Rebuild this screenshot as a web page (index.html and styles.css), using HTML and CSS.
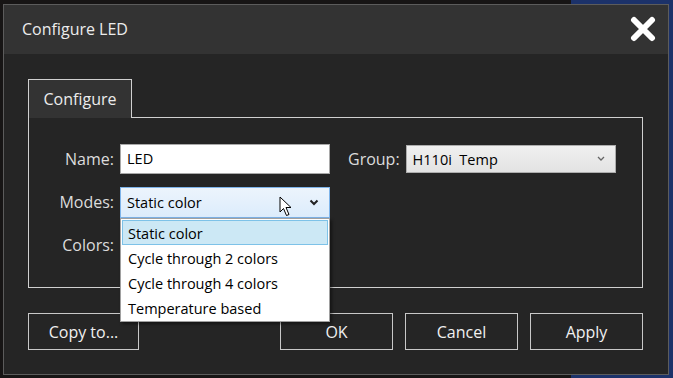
FILE: index.html
```html
<!DOCTYPE html>
<html lang="en">
<head>
  <meta charset="UTF-8">
  <title>Configure LED</title>
  <link rel="stylesheet" href="styles.css">
</head>
<body>
  <div class="dialog">
    <div class="titlebar">
      <span class="title">Configure LED</span>
      <svg class="close" width="26" height="26" viewBox="0 0 26 26">
        <path d="M4 4 L22 22 M22 4 L4 22" stroke="#fff" stroke-width="6" stroke-linecap="round"/>
      </svg>
    </div>
    <div class="content">
      <div class="tab">Configure</div>
      <div class="panel">
        <div class="row">
          <label class="lbl">Name:</label>
          <div class="textbox">LED</div>
          <label class="lbl group-lbl">Group:</label>
          <div class="combo grey">
            <span>H110i&nbsp; Temp</span>
            <svg width="8" height="6" viewBox="0 0 8 6"><path d="M1 1 L4 4 L7 1" fill="none" stroke="#666" stroke-width="1.3"/></svg>
          </div>
        </div>
        <div class="row">
          <label class="lbl">Modes:</label>
          <div class="combo active">
            <span>Static color</span>
            <svg width="10" height="7" viewBox="0 0 10 7"><path d="M1.5 1.5 L5 5 L8.5 1.5" fill="none" stroke="#222" stroke-width="2"/></svg>
            <svg class="cursor" width="14" height="21" viewBox="0 0 14 21">
              <path d="M1 1 L1 16 L4.5 12.5 L7.5 19.5 L10 18.5 L7 11.5 L12 11.5 Z" fill="#fff" stroke="#000" stroke-width="1" stroke-linejoin="round"/>
            </svg>
            <ul class="droplist">
              <li class="selected">Static color</li>
              <li>Cycle through 2 colors</li>
              <li>Cycle through 4 colors</li>
              <li>Temperature based</li>
            </ul>
          </div>
        </div>
        <div class="row">
          <label class="lbl">Colors:</label>
        </div>
      </div>
      <div class="buttons">
        <button class="btn">Copy to...</button>
        <div class="spacer"></div>
        <button class="btn">OK</button>
        <button class="btn">Cancel</button>
        <button class="btn">Apply</button>
      </div>
    </div>
  </div>
</body>
</html>
```

FILE: styles.css
```css
body {
  margin: 0;
  width: 673px;
  height: 378px;
  overflow: hidden;
  font-family: 'Open Sans', 'Noto Sans', Arial, sans-serif;
  background: linear-gradient(90deg, #171515 0, #171515 571px, #1c326a 571px);
  padding: 4px 0 0 3px;
  box-sizing: border-box;
}
.dialog {
  width: 666px;
  height: 371px;
  box-sizing: border-box;
  border: 1px solid #5c5c5c;
  background: #252525;
  display: flex;
  flex-direction: column;
}
.titlebar {
  height: 49px;
  background: #333333;
  display: flex;
  align-items: center;
  justify-content: space-between;
  padding: 0 12px 0 18px;
  flex-shrink: 0;
}
.title {
  color: #ececec;
  font-size: 16px;
  margin-top: -2px;
}
.close {
  margin-top: -1px;
}
.content {
  padding: 25px 24px 0 24px;
  color: #dedede;
}
.tab {
  position: relative;
  z-index: 1;
  width: 104px;
  height: 39px;
  box-sizing: border-box;
  border: 1px solid #d0d0d0;
  border-bottom: none;
  background: #333333;
  margin-bottom: -1px;
  font-size: 16px;
  text-align: center;
  line-height: 38px;
  color: #ececec;
}
.panel {
  width: 615px;
  height: 171px;
  box-sizing: border-box;
  border: 1px solid #d0d0d0;
  padding-top: 26px;
  display: flex;
  flex-direction: column;
  gap: 13px;
}
.row {
  display: flex;
  align-items: center;
  height: 30px;
}
.lbl {
  width: 85px;
  text-align: right;
  font-size: 16px;
  margin-right: 6px;
  color: #dcdcdc;
}
.group-lbl {
  width: auto;
  margin: 0 6px 0 18px;
}
.textbox {
  width: 210px;
  height: 30px;
  box-sizing: border-box;
  background: #fff;
  border: 1px solid #a9a9a9;
  color: #000;
  font-size: 14.5px;
  line-height: 28px;
  padding-left: 6px;
}
.combo {
  position: relative;
  width: 210px;
  box-sizing: border-box;
  display: flex;
  align-items: center;
  justify-content: space-between;
  color: #000;
  font-size: 14.5px;
  padding: 0 10px 0 6px;
}
.combo.grey {
  height: 28px;
  background: linear-gradient(#f0f0f0, #e3e3e3);
  border: 1px solid #adadad;
}
.combo.active {
  height: 31px;
  background: linear-gradient(#ecf4fc, #dcecfc);
  border: 1px solid #7eb4ea;
}
.cursor {
  position: absolute;
  left: 158px;
  top: 8px;
}
.droplist {
  position: absolute;
  left: -1px;
  top: 30px;
  width: 210px;
  box-sizing: border-box;
  margin: 0;
  padding: 1px;
  list-style: none;
  background: #fff;
  border: 1px solid #a0a0a0;
  box-shadow: 2px 2px 3px rgba(0, 0, 0, 0.45);
  z-index: 2;
}
.droplist li {
  height: 25px;
  line-height: 25px;
  padding-left: 5px;
  box-sizing: border-box;
  border: 1px solid transparent;
  color: #000;
}
.droplist li.selected {
  background: #cce8f5;
  border-color: #7dc2e8;
}
.buttons {
  display: flex;
  gap: 12px;
  margin-top: 25px;
  width: 615px;
}
.spacer {
  flex: 1;
}
.btn {
  width: 113px;
  height: 37px;
  background: transparent;
  border: 1px solid #c8c8c8;
  color: #f0f0f0;
  font-family: inherit;
  font-size: 16px;
  padding: 1px 0 0;
}
.btn:first-child {
  width: 111px;
}
```
